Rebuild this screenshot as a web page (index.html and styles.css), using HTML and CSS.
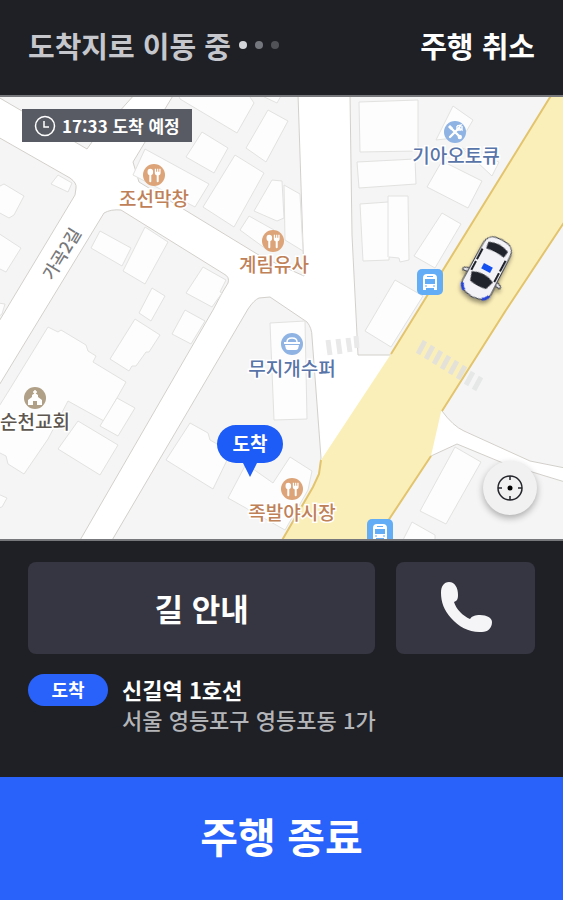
FILE: index.html
```html
<!DOCTYPE html>
<html lang="ko">

<head>
    <meta charset="UTF-8">
    <meta name="viewport" content="width=device-width, initial-scale=1.0">
    <title>주행 중</title>
    <link rel="stylesheet" href="styles.css">
</head>

<body>
    <header class="header">
        <h1 class="status">도착지로 이동 중
            <span class="dots" aria-hidden="true"><i></i><i></i><i></i></span>
        </h1>
        <button class="cancel" type="button">주행 취소</button>
    </header>
    <main class="map">
        <svg class="map-canvas" viewBox="0 96 563 444" preserveAspectRatio="xMidYMid slice" role="img" aria-label="지도">
            <defs>
                <symbol id="food" viewBox="0 0 22 22">
                    <circle cx="11" cy="11" r="11" fill="#dca478" />
                    <ellipse cx="7.3" cy="8" rx="2.8" ry="3.3" fill="#fff" />
                    <path d="M7.3 10v7.2M14.7 10v7.2" stroke="#fff" stroke-width="2" stroke-linecap="round" />
                    <path d="M11.8 4.8v4q0 2.6 2.9 2.6t2.9-2.6v-4l-1.3 0v3h-1v-3h-1.2v3h-1v-3z" fill="#fff" />
                </symbol>
                <symbol id="bus" viewBox="0 0 26 26">
                    <rect width="26" height="26" rx="5" fill="#62adf6" />
                    <path d="M6 21V9q0-4 4-4h6q4 0 4 4v12h-3v-2H9v2z" fill="#fff" />
                    <path d="M8 10h10v5H8zM10 7h6v1h-6z" fill="#62adf6" />
                    <path d="M8 17h2M16 17h2" stroke="#62adf6" />
                </symbol>
            </defs>

            <rect y="96" width="563" height="444" fill="#fff" />

            <!-- blocks -->
            <g class="block">
                <path d="M-2 97L87 149L92 142L135 94H-2z" />
                <path d="M-2 137L70 178Q77 183 76 188L75 195L-2 323z" />
                <path d="M-2 387L104 213Q111 209 121 210L224 274Q230 277 228 283L222 293L213 310L79 542H-2z" />
                <path d="M174 94L133 162L139 182L262 257L304 276L298 94z" />
                <path d="M111 542L248 309Q254 300 259 298L270 297L307 322Q312 328 312 337L315 377L321 458L319 474L313 487L281 542z" />
                <path d="M350 94L352 235L358 355H391L552 94z" />
                <path d="M565 221L506 310L442 411Q453 426 464 431L530 461L565 468z" />
                <path d="M374 542L431 456L457 444L503 463L542 475L565 482V542z" />
            </g>

            <!-- main road -->
            <path d="M552 94L391 354L321 460L319 474L313 487L281 542H374L431 456L441 412L565 221V94z" fill="#fbefb9" />
            <path class="road-edge" d="M552 94L391 354M321 460L319 474L313 487L281 542M374 542L431 456M442 411L506 310L565 221" />

            <!-- buildings -->
            <g class="building">
                <path d="M-2 187L4 184L24 196L14 215L9 218L-2 212zM-2 233L21 248L6 272L-2 268zM58 175L72 183L68 192L51 184z" />
                <path d="M-2 303L5 304L2 314L-2 317z" />
                <path d="M100 231L131 248L122 266L91 248zM145 227L168 242L145 284L123 271z" />
                <path d="M203 267L226 280L220 292L222 293L212 307L186 293zM152 288L165 296L151 321L139 313zM185 310L205 321L191 344L172 334z" />
                <path d="M135 319L160 335L149 352L146 352L136 366L132 366L129 371L110 359z" />
                <path d="M48 327L58 332L61 330L86 345L88 351L96 356L93 362L126 382L104 421L68 401L48 439L24 474L8 464L6 456L-2 452V408L8 392z" />
                <path d="M117 398L135 408L118 436L100 426zM78 421L118 445L100 475L58 449z" />
                <path d="M-2 494L7 498L2 507L-2 508z" />
                <path d="M145 149L209 184L195 207L133 175zM178 94H248L254 103L237 133L180 99z" />
                <path d="M202 132L228 148L214 173L186 157zM268 110L288 121L266 162L246 148zM235 155L264 173L234 227L203 207zM258 94H282L277 103z" />
                <path d="M272 180L282 181L284 218L277 221L254 211zM249 216L274 230L266 249L240 230zM284 185L300 194L303 251L285 240z" />
                <path d="M359 102L418 100V151L360 152zM357 162L415 159L416 184L359 188z" />
                <path d="M453 106L473 120L463 137L436 140zM462 148L499 162L492 176z" />
                <path d="M442 161L482 181L468 208L427 187z" />
                <path d="M360 204L388 202V196H408L409 260L400 262L399 258L389 257V260L363 261zM388 202V257" />
                <path d="M442 213L461 224L435 268L414 256zM395 280L423 296L391 347L365 331z" />
                <path d="M270 323L305 321L307 419L274 420z" />
                <path d="M190 423L208 433L210 440L231 452L213 489L166 460zM246 464L273 483L290 457L312 471L308 490L285 530L228 498z" />
                <path d="M455 447L481 462L446 524L420 511zM412 522L435 535V542H402z" />
            </g>

            <!-- crosswalks -->
            <path class="crosswalk" d="M328 340l2 15M338 339l2 15M348 338l2 14M356 336l1 12" stroke="#e9e9e9" />
            <path class="crosswalk" d="M425 341l-7 13M433 346l-7 13M441 351l-7 13M449 356l-7 13M457 361l-7 13M465 366l-7 13" stroke="#e4e2d8" />
            <path class="crosswalk" d="M473 372l-7 13M481 377l-7 13" stroke="#e6e8e8" />

            <!-- places -->
            <use href="#food" x="143" y="164" width="22" height="22" />
            <use href="#food" x="262" y="230" width="22" height="22" />
            <use href="#food" x="281" y="478" width="22" height="22" />
            <use href="#bus" x="417" y="269" width="26" height="26" />
            <use href="#bus" x="367" y="519" width="26" height="26" />
            <g transform="translate(455 132)">
                <circle r="11" fill="#8fb3e3" />
                <path d="M-5 5L4 -4M-5 -5L5 5" stroke="#fff" stroke-width="2.4" stroke-linecap="round" />
                <path d="M2 -6L6 -7L4 -4L7 -2L7 -6M2 -6L2 -2L6 -2" stroke="#fff" stroke-width="1.4" fill="none" />
                <circle cx="4.8" cy="5" r="2.2" fill="#fff" />
                <path d="M-7 -5L-5 -7L-2 -4L-4 -2z" fill="#fff" />
            </g>
            <g transform="translate(292 344)">
                <circle r="11" fill="#8fb3e3" />
                <path d="M-5 -2Q-5 -6 0 -6T5 -2" stroke="#fff" stroke-width="1.5" fill="none" />
                <path d="M-8 -2H8V0H-8zM-7 1H7L6 5Q5 6 4 6H-4Q-5 6 -6 5z" fill="#fff" />
            </g>
            <g transform="translate(35 398)">
                <circle r="11" fill="#b0a087" />
                <path d="M0 -8V-3M-2 -6H2" stroke="#fff" stroke-width="1.5" />
                <path d="M-7 7V2L-3 -1V-3L0 -5L3 -3V-1L7 2V7H2V3H-2V7z" fill="#fff" />
            </g>
            <g class="place food">
                <text x="154" y="206">조선막창</text>
                <text x="274" y="272">계림유사</text>
                <text x="292" y="520">족발야시장</text>
            </g>
            <g class="place shop">
                <text x="456" y="163">기아오토큐</text>
                <text x="292" y="376">무지개수퍼</text>
            </g>
            <text class="place church" x="35" y="429">순천교회</text>
            <text class="street" transform="translate(62 254) rotate(-59)" y="6">가곡2길</text>

            <!-- car -->
            <g class="car" transform="translate(487 268) rotate(28)">
                <path d="M-16 8L-21 10L-21 13L-16 12M16 8L21 10L21 13L16 12" fill="#e8e8ee" stroke="#333641" />
                <path d="M-15 -22Q-14 -29 -8 -31Q0 -33 8 -31Q14 -29 15 -22L16 22Q15 29 8 31Q0 34 -8 31Q-15 29 -16 22z" fill="#f2f2f7" stroke="#333641" />
                <path d="M-11 -24Q0 -29 11 -24L10 -17Q0 -19 -10 -17z" fill="#20232b" />
                <path d="M-12 10Q0 4 12 10L9 19Q0 21 -9 19z" fill="#20232b" />
                <path d="M-13 -15V-3M-13 -1V9M13 -15V-3M13 -1V9" stroke="#20232b" stroke-width="2" />
                <rect x="-5" y="-3" width="10" height="6" fill="#1450f0" />
                <path d="M-15 24Q-14 28 -10 30M15 24Q14 28 10 30" stroke="#2643d8" stroke-width="3" fill="none" />
            </g>

            <!-- destination pin -->
            <g>
                <path d="M236 425H264A19 19 0 0 1 264 463H257L250 477L243 463H236A19 19 0 0 1 236 425z" fill="#1d5cf6" />
                <text class="pin-text" x="250" y="451">도착</text>
            </g>
        </svg>
        <p class="eta">
            <svg width="22" height="22" viewBox="0 0 22 22" fill="none" stroke="#fff" aria-hidden="true">
                <circle cx="11" cy="11" r="9.5" stroke-width="1.5" />
                <path d="M10 6V12H15" stroke-width="1.5" />
            </svg>
            17:33 도착 예정
        </p>
        <button class="locate" type="button" aria-label="현재 위치">
            <svg width="28" height="28" viewBox="0 0 28 28" fill="none" stroke="#25262b" aria-hidden="true">
                <circle cx="14" cy="14" r="12" stroke-width="1.5" />
                <path d="M14 2V6M14 22V26M2 14H6M22 14H26" stroke-width="1.5" />
                <circle cx="14" cy="14" r="2.5" fill="#000" stroke="none" />
            </svg>
        </button>
    </main>
    <section class="panel">
        <div class="actions">
            <button class="action" type="button">길 안내</button>
            <button class="action" type="button" aria-label="전화 걸기">
                <svg width="54" height="52" viewBox="0 0 54 52" aria-hidden="true">
                    <path d="M2 12C2 5 5 1 10 1C16 1 19 7 19 14C19 18 18 20 15 21C17 28 24 35 31 38C33 35 36 34 41 34C48 34 53 37 53 41C53 47 49 51 43 51C31 52 20 46 12 37C5 29 2 21 2 12z" fill="#f5f5f7" />
                </svg>
            </button>
        </div>
        <div class="destination">
            <span class="badge">도착</span>
            <div>
                <h2 class="place-name">신길역 1호선</h2>
                <p class="address">서울 영등포구 영등포동 1가</p>
            </div>
        </div>
    </section>
    <button class="finish" type="button">주행 종료</button>
</body>

</html>
```
FILE: styles.css
```css
html {
    box-sizing: border-box;
    font-family: "Noto Sans CJK KR", sans-serif;
    font-size: 16px;
}

*,
*::before,
*::after {
    box-sizing: inherit;
}

body {
    margin: 0;
    min-height: 100vh;
    display: flex;
    flex-direction: column;
    background-color: #1e2025;
    color: #fff;
}

h1,
h2,
p {
    margin: 0;
}

button {
    border: 0;
    padding: 0;
    font-family: inherit;
    font-weight: 700;
    color: inherit;
    cursor: pointer;
}

.header {
    display: flex;
    justify-content: space-between;
    align-items: center;
    padding: 22px 28px 27px;
}

.status {
    display: flex;
    align-items: center;
    gap: 8px;
    font-size: 29px;
    line-height: 46px;
    color: #c5c7cd;
}

.dots {
    display: flex;
    gap: 8px;
}

.dots i {
    width: 8px;
    height: 8px;
    border-radius: 50%;
    background-color: #d4d5da;
}

.dots i:nth-child(2) {
    background-color: #75777e;
}

.dots i:nth-child(3) {
    background-color: #505258;
}

.cancel {
    background: none;
    font-size: 29px;
    line-height: 46px;
}

.map {
    position: relative;
    flex: 1 0 440px;
    border-top: 2px solid #77787b;
    border-bottom: 2px solid #77787b;
    overflow: hidden;
}

.map-canvas {
    position: absolute;
    inset: 0;
    width: 100%;
    height: 100%;
}

.block {
    fill: #f5f5f5;
    stroke: #d3d0cb;
}

.building {
    fill: #fdfdfd;
    stroke: #e2e2e1;
}

.road-edge {
    fill: none;
    stroke: #e3c46e;
    stroke-width: 2;
}

.crosswalk {
    stroke-width: 5;
}

.place {
    font-size: 19px;
    font-weight: 500;
    text-anchor: middle;
    stroke: #fff;
    stroke-width: 3px;
    paint-order: stroke;
}

.food {
    fill: #bf8158;
}

.shop {
    fill: #5874a8;
}

.church {
    fill: #5d5750;
}

.street {
    font-size: 17px;
    font-weight: 500;
    text-anchor: middle;
    fill: #77787a;
}

.car {
    filter: drop-shadow(1px 3px 2px rgba(0, 0, 0, .4));
}

.pin-text {
    font-size: 19px;
    font-weight: 700;
    text-anchor: middle;
    fill: #fff;
}

.eta {
    position: absolute;
    top: 12px;
    left: 22px;
    display: flex;
    align-items: center;
    gap: 6px;
    padding: 0 12px;
    background-color: #595b64;
    font-size: 17px;
    font-weight: 700;
    line-height: 33px;
}

.locate {
    position: absolute;
    right: 26px;
    bottom: 24px;
    display: grid;
    place-items: center;
    width: 54px;
    height: 54px;
    border-radius: 50%;
    background-color: #f1f1f2;
    box-shadow: 0 3px 7px rgba(0, 0, 0, .3);
}

.panel {
    padding: 21px 28px 43px;
}

.actions {
    display: grid;
    grid-template-columns: 5fr 2fr;
    gap: 21px;
}

.action {
    display: grid;
    place-items: center;
    height: 92px;
    padding-bottom: 2px;
    border-radius: 8px;
    background-color: #353641;
    font-size: 31px;
}

.destination {
    display: flex;
    align-items: flex-start;
    gap: 14px;
    margin-top: 20px;
}

.badge {
    width: 80px;
    padding-bottom: 2px;
    border-radius: 16px;
    background-color: #2962fa;
    font-size: 18px;
    font-weight: 700;
    line-height: 30px;
    text-align: center;
}

.place-name {
    font-size: 22px;
    line-height: 30px;
}

.address {
    font-size: 22px;
    font-weight: 500;
    line-height: 30px;
    color: #b4b5b9;
}

.finish {
    padding: 27px 0 33px;
    background-color: #2962fa;
    font-size: 41px;
    line-height: 63px;
}
```
